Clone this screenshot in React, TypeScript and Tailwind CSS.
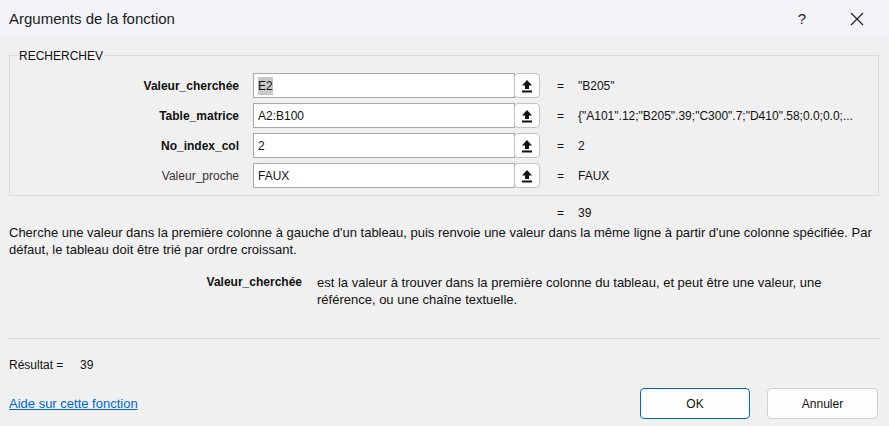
import React from "react";

const font = { fontFamily: '"Segoe UI", "Liberation Sans", Arial, sans-serif' };

type Arg = { label: string; value: string; result: string; required: boolean; selected?: boolean };

const args: Arg[] = [
  { label: "Valeur_cherchée", value: "E2", result: '"B205"', required: true, selected: true },
  { label: "Table_matrice", value: "A2:B100", result: '{"A101".12;"B205".39;"C300".7;"D410".58;0.0;0.0;...', required: true },
  { label: "No_index_col", value: "2", result: "2", required: true },
  { label: "Valeur_proche", value: "FAUX", result: "FAUX", required: false },
];

const RefIcon = () => (
  <svg width="12" height="14" viewBox="0 0 12 14">
    <path d="M6 1 L11 6.5 L8 6.5 L8 10 L4 10 L4 6.5 L1 6.5 Z" fill="#111" />
    <rect x="1" y="11.5" width="10" height="2" fill="#111" />
  </svg>
);

const ArgRow = ({ a }: { a: Arg }) => (
  <div className="flex items-center h-[25px]">
    <div
      className={
        "w-[229px] text-right text-[12px] " +
        (a.required ? "font-bold text-[#111]" : "text-[#333]")
      }
    >
      {a.label}
    </div>
    <div className="ml-[14px] flex h-[25px]">
      <div className="w-[262px] h-full bg-white border border-[#a9a9a9] flex items-center pl-[4px] text-[12px] text-[#111]">
        <span className={a.selected ? "bg-[#c8c8c8]" : ""}>{a.value}</span>
      </div>
      <div className="w-[26px] h-full ml-[-1px] bg-white border border-[#c4c4c4] rounded-[4px] flex items-center justify-center">
        <RefIcon />
      </div>
    </div>
    <span className="ml-[17px] text-[12px] text-[#111] w-[21px]">=</span>
    <span className="text-[12px] text-[#111]">{a.result}</span>
  </div>
);

export default function App() {
  return (
    <div className="w-[889px] h-[426px] bg-[#f0f0f0] flex flex-col text-[#111]" style={font}>
      <div className="h-[38px] bg-[#f3f4f8] flex items-center pl-[9px] pr-[20px] shrink-0">
        <span className="text-[15px] text-[#1a1a1a]">Arguments de la fonction</span>
        <span className="ml-auto text-[15px] text-[#222] mr-[44px]">?</span>
        <svg width="14" height="14" viewBox="0 0 14 14" className="mr-[5px]">
          <path d="M1 1 L13 13 M13 1 L1 13" stroke="#222" strokeWidth="1.2" />
        </svg>
      </div>

      <div className="px-[9px] flex flex-col">
        <div className="relative mt-[17px] h-[141px] border border-[#dcdcdc] w-[870px]">
          <span className="absolute -top-[9px] left-[8px] bg-[#f0f0f0] px-px text-[12px] text-[#111]">
            RECHERCHEV
          </span>
          <div className="flex flex-col gap-[5px] pt-[17px]">
            {args.map((a) => (
              <ArgRow key={a.label} a={a} />
            ))}
          </div>
        </div>

        <div className="flex items-center h-[17px] mt-[8px] pl-[548px] text-[12px]">
          <span className="w-[21px]">=</span>
          <span>39</span>
        </div>

        <p className="mt-[3px] text-[13px] leading-[17px] whitespace-nowrap">
          Cherche une valeur dans la première colonne à gauche d'un tableau, puis renvoie une valeur dans la même ligne à partir d'une colonne spécifiée. Par
          <br />
          défaut, le tableau doit être trié par ordre croissant.
        </p>

        <div className="flex mt-[16px] leading-[17px]">
          <div className="w-[293px] text-right font-bold text-[12px]">Valeur_cherchée</div>
          <p className="ml-[15px] w-[540px] text-[13px] whitespace-nowrap">
            est la valeur à trouver dans la première colonne du tableau, et peut être une valeur, une
            <br />
            référence, ou une chaîne textuelle.
          </p>
        </div>

        <div className="mt-[30px] h-px bg-[#d9d9d9] w-[871px]" />

        <div className="flex mt-[17px] text-[12px] h-[17px] items-center">
          <span className="w-[71px]">Résultat =</span>
          <span>39</span>
        </div>

        <div className="flex items-center mt-[15px]">
          <a href="#" className="text-[13px] text-[#0066cc] underline">
            Aide sur cette fonction
          </a>
          <button className="ml-auto w-[110px] h-[31px] rounded-[4px] bg-[#fdfdfd] border-[1.5px] border-[#0067c0] text-[12px] text-[#111]">
            OK
          </button>
          <button className="ml-[17px] w-[111px] h-[31px] rounded-[4px] bg-[#fdfdfd] border border-[#d0d0d0] text-[12px] text-[#111] mr-[2px]">
            Annuler
          </button>
        </div>
      </div>
    </div>
  );
}
